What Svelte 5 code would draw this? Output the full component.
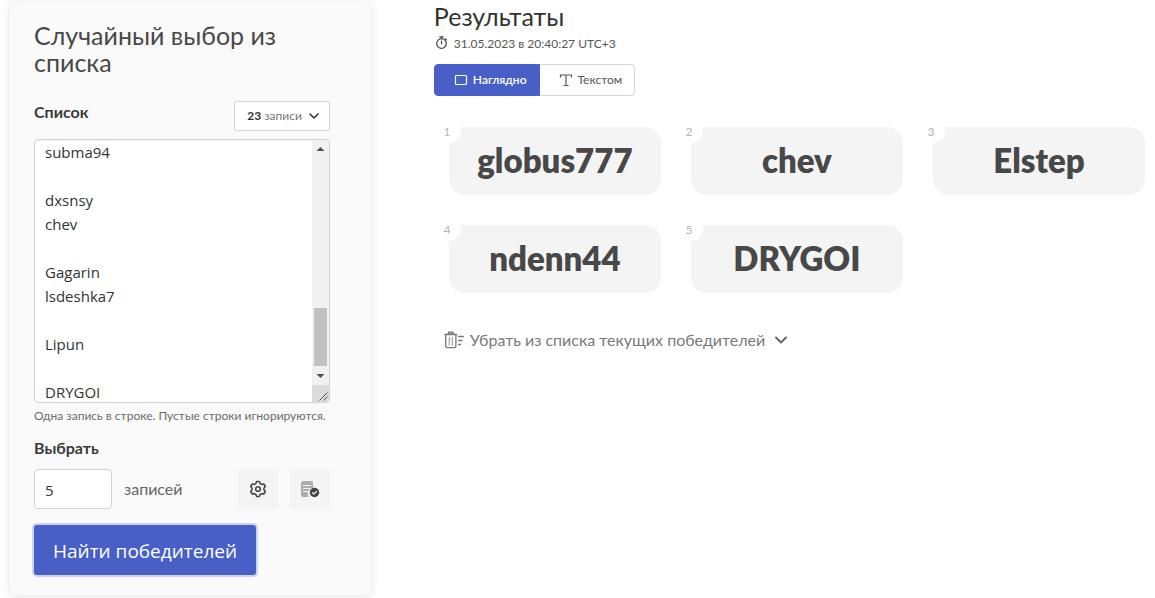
<script lang="ts">
  import { onMount } from 'svelte';

  const LINE_HEIGHT = 24;
  const EMPTY_LINES = 28;

  const winners = ['globus777', 'chev', 'Elstep', 'ndenn44', 'DRYGOI'];

  let listText = $state(
    '\n'.repeat(EMPTY_LINES) +
    ['subma94', '', 'dxsnsy', 'chev', '', 'Gagarin', 'lsdeshka7', '', 'Lipun', '', 'DRYGOI'].join('\n')
  );
  let count = $state('5');
  let view = $state('cards');
  let listBox: HTMLTextAreaElement;
  let thumbTop = $state(0);
  let thumbHeight = $state(0);

  // thumb position and size in percent of the track
  function updateThumb() {
    thumbTop = (listBox.scrollTop / listBox.scrollHeight) * 100;
    thumbHeight = (listBox.clientHeight / listBox.scrollHeight) * 100;
  }

  onMount(() => {
    listBox.scrollTop = EMPTY_LINES * LINE_HEIGHT + 6;
    updateThumb();
  });
</script>

<div class="page">
  <form class="panel" onsubmit={(e) => e.preventDefault()}>
    <h1 class="panel-title">Случайный выбор из списка</h1>

    <div class="list-head">
      <label class="field-label" for="list">Список</label>
      <button type="button" class="records-btn">
        <span><b>23</b> записи</span>
        <svg width="12" height="8" viewBox="0 0 12 8" aria-hidden="true">
          <path d="M2 2l4 4 4-4" fill="none" stroke="#333" stroke-width="1.600" stroke-linecap="round" stroke-linejoin="round" />
        </svg>
      </button>
    </div>

    <div class="list-wrap">
      <textarea id="list" class="list-box" bind:this={listBox} bind:value={listText} onscroll={updateThumb} spellcheck="false"></textarea>
      <div class="scrollbar" aria-hidden="true">
        <svg class="scroll-arrow" viewBox="0 0 17 17"><path d="M4.500 11h8L8.500 7z" fill="#505050" /></svg>
        <div class="track">
          <div class="thumb" style="top: {thumbTop}%; height: {thumbHeight}%"></div>
        </div>
        <svg class="scroll-arrow" viewBox="0 0 17 17"><path d="M4.500 6h8l-4 4z" fill="#505050" /></svg>
        <svg class="resizer" viewBox="0 0 17 17"><path d="M7.500 15.500l8-8M11.500 15.500l4-4" stroke="#505050" /></svg>
      </div>
    </div>
    <p class="hint">Одна запись в строке. Пустые строки игнорируются.</p>

    <label class="field-label" for="count">Выбрать</label>
    <div class="count-row">
      <input id="count" class="count-input" type="text" inputmode="numeric" bind:value={count} />
      <span class="count-unit">записей</span>
      <button type="button" class="icon-btn" aria-label="Настройки">
        <svg width="18" height="18" viewBox="0 0 18 18" fill="none" stroke="#484848" stroke-width="1.600" stroke-linejoin="round" aria-hidden="true">
          <path d="M7.600 1.500h2.800l.8 2.100 1.400.8 2.200-.4 1.500 2.500-1.400 1.700v1.600l1.400 1.700-1.500 2.500-2.200-.4-1.400.8-.8 2.100H7.600l-.8-2.100-1.400-.8-2.200.4-1.500-2.500 1.400-1.700V8.200L1.700 6.500 3.200 4l2.200.4 1.400-.8z" />
          <circle cx="9" cy="9" r="2.300" />
        </svg>
      </button>
      <button type="button" class="icon-btn" aria-label="Проверка списка">
        <svg width="20" height="18" viewBox="0 0 20 18" fill="none" aria-hidden="true">
          <path d="M3 1h8a2 2 0 0 1 2 2v5a5.500 5.500 0 0 0-4 9H3a2 2 0 0 1-2-2V3a2 2 0 0 1 2-2z" fill="#acacac" />
          <path d="M3.500 5.500h7M3.500 8.500h6M3.500 11.500h4" stroke="#f4f4f4" stroke-width="1.200" stroke-linecap="round" />
          <circle cx="14.500" cy="12.500" r="4.700" fill="#444" />
          <path d="m12.500 12.700 1.400 1.300 2.700-2.600" stroke="#f4f4f4" stroke-width="1.200" stroke-linecap="round" stroke-linejoin="round" />
        </svg>
      </button>
    </div>

    <button type="submit" class="submit-btn">Найти победителей</button>
  </form>

  <main class="results">
    <h2 class="results-title">Результаты</h2>
    <p class="results-time">
      <svg width="13" height="16" viewBox="0 0 13 16" fill="none" stroke="#444" stroke-width="1.200" stroke-linecap="round" aria-hidden="true">
        <circle cx="6.500" cy="7.500" r="4.800" />
        <path d="M4.800.8h3.400M6.500.8v1.900M6.500 5v2.800M10.300 2.800l1.100 1" />
      </svg>
      31.05.2023 в 20:40:27 UTC+3
    </p>

    <div class="view-switch">
      <button type="button" class="view-btn" class:active={view === 'cards'} aria-pressed={view === 'cards'} onclick={() => (view = 'cards')}>
        <svg width="14" height="14" viewBox="0 0 14 14" fill="none" stroke="currentColor" stroke-width="1.200" aria-hidden="true">
          <rect x="1.500" y="2.500" width="11" height="9" rx="1" />
        </svg>
        Наглядно
      </button>
      <button type="button" class="view-btn" class:active={view === 'text'} aria-pressed={view === 'text'} onclick={() => (view = 'text')}>
        <svg width="14" height="14" viewBox="0 0 14 14" fill="none" stroke="currentColor" stroke-width="1.200" aria-hidden="true">
          <path d="M1.500 4.500v-2.500h11v2.500M7 2v10.500M4.500 12.500h5" />
        </svg>
        Текстом
      </button>
    </div>

    <ol class="winners">
      {#each winners as name, i}
        <li class="winner">
          <span class="place">{i + 1}</span>
          {name}
        </li>
      {/each}
    </ol>

    <button type="button" class="remove-btn">
      <svg width="20" height="18" viewBox="0 0 20 18" fill="none" stroke="#777" stroke-width="1.300" stroke-linecap="round" aria-hidden="true">
        <path d="M1 3.500h11.500M4 3.200l.8-2h4l.8 2" fill="#aaa" />
        <path d="M1.700 4v11.200c0 1 .6 1.500 1.500 1.500h7.200c.9 0 1.500-.5 1.500-1.500V4" />
        <path d="M5.300 6.500v7.500M8.300 6.500v7.500" stroke="#aaa" />
        <path d="M14.600 5.500h4.800M14.600 9.500h3.600M14.600 13.500h2" />
      </svg>
      Убрать из списка текущих победителей
      <svg class="remove-arrow" width="14" height="10" viewBox="0 0 14 10" fill="none" aria-hidden="true">
        <path d="M2 2.500 7 7.500l5-5" stroke="#666" stroke-width="2" stroke-linecap="round" stroke-linejoin="round" />
      </svg>
    </button>
  </main>
</div>

<style>
  :global(body) {
    background: #fff;
    color: #484848;
    font-family: Lato, "Open Sans", sans-serif;
    font-size: 16px;
    line-height: 24px;
  }
  :global(*) { box-sizing: border-box; }
  button, input, textarea { font: inherit; color: inherit; margin: 0; }
  button { cursor: pointer; }
  h1, h2, p, ol { margin: 0; padding: 0; font-weight: 400; }
  svg { flex: none; }

  .page {
    display: grid;
    grid-template-columns: minmax(0, 34fr) minmax(0, 67fr);
    align-items: start;
    gap: 63px;
    padding: 2px 10px 3px;
  }

  .panel {
    padding: 20px 41px 20px 24px;
    background: #fafafa;
    border-radius: 5px;
    box-shadow: 0 1px 8px rgba(0, 0, 0, 0.12);
  }
  .panel-title { font-size: 25px; line-height: 27px; }
  .list-head {
    display: flex;
    align-items: center;
    justify-content: space-between;
    margin: 24px 0 7px;
  }
  .field-label { display: block; font-weight: 700; color: #3a3a3a; }
  .list-head .field-label { margin-bottom: 8px; }
  .records-btn {
    display: flex;
    align-items: center;
    gap: 6px;
    height: 30px;
    padding: 0 9px 0 12px;
    border: 1px solid #d6d6d6;
    border-radius: 2px;
    background: #fff;
    font-size: 12px;
    color: #777;
  }
  .records-btn b { color: #333; }

  .list-wrap { position: relative; }
  .list-box {
    display: block;
    width: 100%;
    height: 264px;
    padding: 6px 28px 6px 10px;
    border: 1px solid #d2d2d2;
    border-radius: 4px;
    background: #fff;
    box-shadow: inset 0 1px 1px rgba(0, 0, 0, 0.05);
    color: #333;
    font-family: "Open Sans", sans-serif;
    font-size: 15px;
    line-height: 24px;
    resize: none;
    scrollbar-width: none;
    outline: none;
  }
  .scrollbar {
    position: absolute;
    inset: 1px 1px 1px auto;
    display: flex;
    flex-direction: column;
    width: 17px;
    border-radius: 0 3px 3px 0;
    background: #f1f1f1;
    overflow: hidden;
    pointer-events: none;
  }
  .scroll-arrow, .resizer { width: 17px; height: 17px; }
  .resizer { background: #dcdcdc; }
  .track { position: relative; flex: 1; }
  .thumb { position: absolute; left: 2px; right: 2px; background: #c1c1c1; }

  .hint { margin: 4px 0 11px; font-size: 12px; line-height: 18px; color: #6c6c6c; white-space: nowrap; }

  .count-row { display: flex; align-items: center; gap: 12px; margin: 9px 0 16px; }
  .count-input {
    width: 78px;
    height: 40px;
    padding: 2px 10px 0;
    border: 1px solid #d2d2d2;
    border-radius: 4px;
    background: #fff;
    font-family: "Open Sans", sans-serif;
    font-size: 15px;
    color: #333;
  }
  .count-unit { flex: 1; color: #666; }
  .icon-btn {
    display: flex;
    align-items: center;
    justify-content: center;
    width: 40px;
    height: 40px;
    padding: 0;
    border: 0;
    border-radius: 4px;
    background: #f4f4f4;
  }
  .submit-btn {
    display: block;
    height: 50px;
    padding: 2px 19px 0;
    border: 0;
    border-radius: 3px;
    background: #485fc7;
    box-shadow: 0 0 0 2px rgba(72, 95, 199, 0.25);
    color: #fff;
    font-family: "Open Sans", sans-serif;
    font-size: 19px;
    white-space: nowrap;
  }

  .results-title { font-size: 25px; line-height: 28px; color: #333; }
  .results-time {
    display: flex;
    align-items: center;
    gap: 6px;
    margin: 5px 0 11px;
    padding-left: 1px;
    font-size: 12px;
    line-height: 18px;
    color: #555;
  }
  .view-switch { display: flex; }
  .view-btn {
    display: flex;
    align-items: center;
    gap: 5px;
    height: 32px;
    padding: 0 12px 0 19px;
    border: 1px solid #d6d6d6;
    border-left: 0;
    border-radius: 0 4px 4px 0;
    background: #fff;
    font-size: 12px;
    color: #555;
  }
  .view-btn:first-child { border-left: 1px solid #d6d6d6; border-radius: 4px 0 0 4px; }
  .view-btn.active { border-color: #485fc7; background: #485fc7; color: #fff; font-weight: 600; }

  .winners {
    display: grid;
    grid-template-columns: repeat(3, 1fr);
    gap: 30px;
    margin: 31px 0 33px;
    padding-left: 15px;
    list-style: none;
  }
  .winner {
    position: relative;
    padding: 13px 16px 15px;
    border-radius: 16px;
    background: #f4f4f4;
    font-size: 33px;
    font-weight: 800;
    line-height: 40px;
    text-align: center;
  }
  .place {
    position: absolute;
    top: -8px;
    left: -16px;
    width: 28px;
    height: 24px;
    border-radius: 12px;
    background: #fff;
    font-size: 12px;
    font-weight: 400;
    line-height: 26px;
    color: #b5b5b5;
  }

  .remove-btn {
    display: flex;
    align-items: center;
    gap: 6px;
    margin-left: 10px;
    padding: 2px 0;
    border: 0;
    background: none;
    color: #7a7a7a;
  }
  .remove-arrow { margin-left: 3px; }
</style>
